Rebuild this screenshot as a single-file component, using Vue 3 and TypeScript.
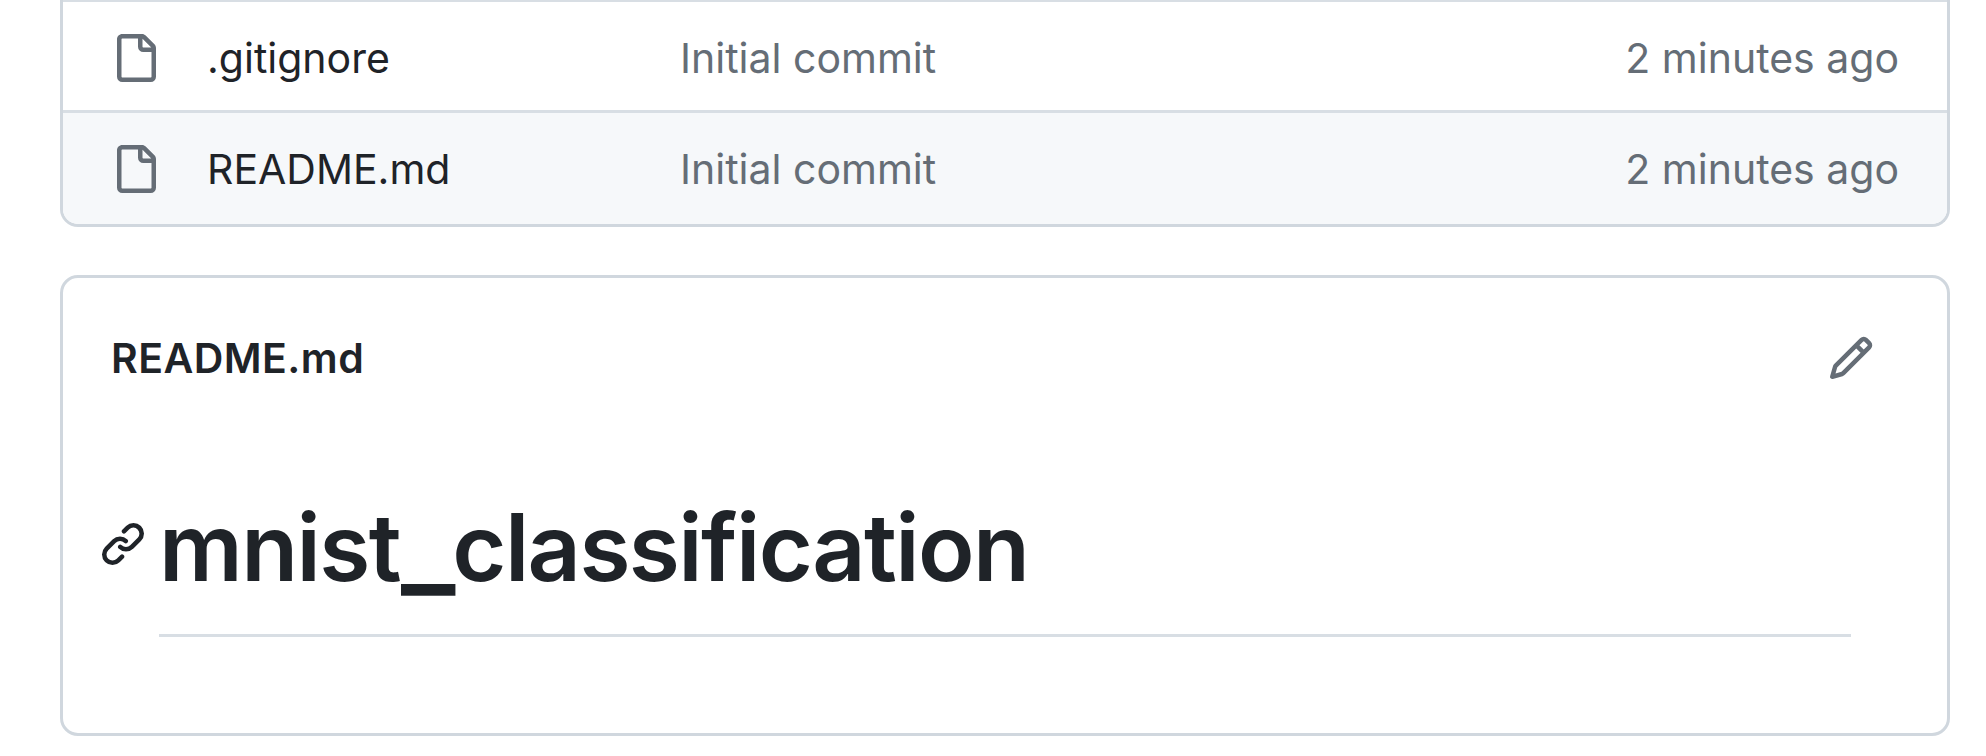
<script setup lang="ts">
interface FileEntry {
  name: string
  message: string
  age: string
}

const files: FileEntry[] = [
  { name: '.gitignore', message: 'Initial commit', age: '2 minutes ago' },
  { name: 'README.md', message: 'Initial commit', age: '2 minutes ago' },
]
</script>

<template>
  <main class="page">
    <section class="files">
      <div v-for="file in files" :key="file.name" class="row">
        <svg class="icon muted" viewBox="0 0 16 16" aria-hidden="true">
          <path d="M2 1.75C2 .784 2.784 0 3.75 0h6.586c.464 0 .909.184 1.237.513l2.914 2.914c.329.328.513.773.513 1.237v9.586A1.75 1.75 0 0 1 13.25 16h-9.5A1.75 1.75 0 0 1 2 14.25Zm1.75-.25a.25.25 0 0 0-.25.25v12.5c0 .138.112.25.25.25h9.5a.25.25 0 0 0 .25-.25V6h-2.75A1.75 1.75 0 0 1 9 4.25V1.5Zm6.75.062V4.25c0 .138.112.25.25.25h2.688l-.011-.013-2.914-2.914-.013-.011Z" />
        </svg>
        <a class="name">{{ file.name }}</a>
        <span class="message">{{ file.message }}</span>
        <time class="age">{{ file.age }}</time>
      </div>
    </section>

    <section class="readme">
      <header class="readme-head">
        <h2 class="title">README.md</h2>
        <svg class="icon muted" viewBox="0 0 16 16" aria-hidden="true">
          <path d="M11.013 1.427a1.75 1.75 0 0 1 2.474 0l1.086 1.086a1.75 1.75 0 0 1 0 2.474l-8.61 8.61c-.21.21-.47.364-.756.445l-3.251.93a.75.75 0 0 1-.927-.928l.929-3.25c.081-.286.235-.547.445-.758l8.61-8.61Zm.176 4.823L9.75 4.81l-6.286 6.287a.253.253 0 0 0-.064.108l-.558 1.953 1.953-.558a.253.253 0 0 0 .108-.064Zm1.238-3.763a.25.25 0 0 0-.354 0L10.811 3.75l1.439 1.44 1.263-1.263a.25.25 0 0 0 0-.354Z" />
        </svg>
      </header>
      <div class="heading-row">
        <svg class="icon" viewBox="0 0 16 16" aria-hidden="true">
          <path d="m7.775 3.275 1.25-1.25a3.5 3.5 0 1 1 4.95 4.95l-2.5 2.5a3.5 3.5 0 0 1-4.95 0 .751.751 0 0 1 .018-1.042.751.751 0 0 1 1.042-.018 1.998 1.998 0 0 0 2.83 0l2.5-2.5a2.002 2.002 0 0 0-2.83-2.83l-1.25 1.25a.751.751 0 0 1-1.042-.018.751.751 0 0 1-.018-1.042Zm-4.69 9.64a1.998 1.998 0 0 0 2.83 0l1.25-1.25a.751.751 0 0 1 1.042.018.751.751 0 0 1 .018 1.042l-1.25 1.25a3.5 3.5 0 1 1-4.95-4.95l2.5-2.5a3.5 3.5 0 0 1 4.95 0 .751.751 0 0 1-.018 1.042.751.751 0 0 1-1.042.018 1.998 1.998 0 0 0-2.83 0l-2.5 2.5a1.998 1.998 0 0 0 0 2.83Z" />
        </svg>
        <h1 class="heading"><span class="word-a">mnist</span><span class="underscore">_</span><span class="word-b">classification</span></h1>
      </div>
    </section>
  </main>
</template>

<style>
body {
  background: #fff;
  overflow: hidden;
}
</style>

<style scoped>
.page {
  box-sizing: border-box;
  height: 756px;
  padding: 0 36px 0 60px;
  font-family: Inter, "Liberation Sans", sans-serif;
  font-size: 41px;
  line-height: 64px;
  color: #1f2328;
}
.icon {
  display: block;
  flex: none;
  width: 48px;
  height: 48px;
  fill: currentColor;
}
.muted {
  color: #656d76;
}
.files {
  border: 3px solid #d0d7de;
  border-top: 0;
  border-radius: 0 0 18px 18px;
  overflow: hidden;
}
.row {
  display: flex;
  align-items: center;
  padding: 24px 48px 20px;
  border-top: 2px solid #d8dee4;
}
.row + .row {
  padding-bottom: 23px;
  border-top-width: 3px;
  background: #f6f8fa;
}
.name {
  width: 473px;
  margin-left: 48px;
}
.message {
  flex: 1;
  color: #656d76;
}
.age {
  color: #656d76;
}
.readme {
  box-sizing: border-box;
  height: 461px;
  margin-top: 48px;
  border: 3px solid #d0d7de;
  border-radius: 18px;
}
.readme-head {
  display: flex;
  align-items: center;
  justify-content: space-between;
  height: 64px;
  padding: 48px 72px 0 48px;
}
.title {
  margin: 0;
  font-size: 41px;
  font-weight: 600;
  letter-spacing: 0.45px;
}
.heading-row {
  display: flex;
  align-items: flex-start;
  padding: 94px 96px 0 36px;
}
.heading-row .icon {
  margin: 36px 12px 0 0;
}
.heading {
  flex: 1;
  height: 150px;
  margin: 0;
  border-bottom: 3px solid #d8dee4;
  font-size: 93px;
  font-weight: 600;
  line-height: 126px;
  white-space: nowrap;
}
.word-a {
  letter-spacing: -1.6px;
}
.underscore {
  position: relative;
  top: 3px;
  margin: 0 -3px 0 1px;
  font-size: 116px;
  line-height: 0;
}
.word-b {
  letter-spacing: -1.62px;
}
</style>
